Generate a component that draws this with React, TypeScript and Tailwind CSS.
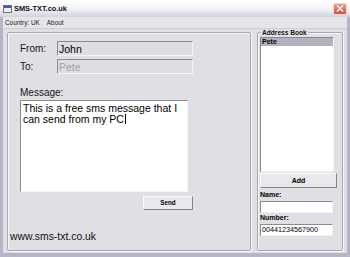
import React from "react";

const sunken =
  "border border-t-[#8a8a90] border-l-[#8a8a90] border-b-[#f4f4f6] border-r-[#f4f4f6]";
const raised =
  "border border-t-[#fbfbfc] border-l-[#fbfbfc] border-b-[#85858c] border-r-[#85858c] bg-[#e9e8ec]";

function WinIcon() {
  return (
    <svg width="9" height="8" viewBox="0 0 9 8" className="shrink-0">
      <rect x="0.5" y="0.5" width="8" height="7" fill="#eef0f6" stroke="#6b6f86" />
      <rect x="1" y="1" width="7" height="2" fill="#3f5fa8" />
    </svg>
  );
}

function CloseButton() {
  return (
    <div className="flex h-[12px] w-[14px] items-center justify-center rounded-[2px] border border-[#f3d6d2] bg-gradient-to-b from-[#ec9a8c] to-[#cf4f3e]">
      <svg width="8" height="7" viewBox="0 0 8 7">
        <path d="M1 0.5 L7 6.5 M7 0.5 L1 6.5" stroke="#fff" strokeWidth="1.4" />
      </svg>
    </div>
  );
}

function FieldRow({ label, value, muted }: { label: string; value: string; muted?: boolean }) {
  return (
    <div className="flex h-[15px] items-center">
      <span className="w-[37px] text-[10px] leading-[12px] text-[#161616]">{label}</span>
      <div
        className={`flex h-[15px] w-[136px] items-center bg-[#dedde2] pl-[1px] text-[10.5px] leading-[12px] ${sunken} ${
          muted ? "text-[#a3a3a8]" : "text-black"
        }`}
      >
        {value}
      </div>
    </div>
  );
}

export default function App() {
  return (
    <div className="flex h-[257px] w-[350px] flex-col bg-[#b4b6c7] font-['Liberation_Sans',Arial,sans-serif] text-black">
      {/* title bar */}
      <div className="flex h-[17px] items-center bg-gradient-to-b from-[#ffffff] via-[#f3f3f7] to-[#d2d3df] pl-[3px] pr-[3px]">
        <WinIcon />
        <span className="ml-[2px] text-[7.4px] font-bold leading-[9px] text-[#111]">SMS-TXT.co.uk</span>
        <div className="ml-auto">
          <CloseButton />
        </div>
      </div>

      <div className="mx-[3px] mb-[4px] flex flex-1 flex-col bg-[#e0dfe3]">
        {/* menu */}
        <div className="flex h-[12px] items-center gap-[7px] border-b border-[#cfced6] bg-[#e6e5ea] pl-[2px] text-[6.4px] leading-[8px] text-[#222]">
          <span>Country: UK</span>
          <span>About</span>
        </div>

        <div className="flex flex-1 gap-[6px] px-[4px] pb-[2px]">
          {/* left panel */}
          <div className="mt-[3px] flex w-[244px] flex-col rounded-[2px] border border-[#a9a9b2] shadow-[inset_1px_1px_0_#f7f7f9,1px_1px_0_#f7f7f9]">
            <div className="flex flex-col pl-[12px]">
              <div className="mt-[8px]">
                <FieldRow label="From:" value="John" />
              </div>
              <div className="mt-[3px]">
                <FieldRow label="To:" value="Pete" muted />
              </div>
              <span className="mt-[12px] text-[10px] leading-[13px] text-[#161616]">Message:</span>
              <div
                className={`mt-[1px] h-[92px] w-[168px] bg-white px-[2px] pt-[2px] text-[10.5px] leading-[11px] ${sunken}`}
              >
                This is a free sms message that I can send from my PC
                <span className="ml-[1px] inline-block h-[10px] w-[1px] bg-black align-[-1px]" />
              </div>
              <button
                type="button"
                className={`ml-[123px] mt-[4px] flex h-[14px] w-[50px] items-center justify-center text-[6.3px] font-bold leading-[8px] ${raised}`}
              >
                Send
              </button>
            </div>
            <span className="ml-[2px] mt-auto mb-[7px] text-[10.4px] leading-[12px] text-[#111]">
              www.sms-txt.co.uk
            </span>
          </div>

          {/* address book */}
          <fieldset className="w-[86px] rounded-[2px] border border-[#a9a9b2] shadow-[inset_1px_1px_0_#f7f7f9,1px_1px_0_#f7f7f9]">
            <legend className="ml-[3px] px-[1px] text-[6.6px] font-bold leading-[7px] text-[#111]">
              Address Book
            </legend>
            <div className="flex flex-col pl-[2px]">
              <div className={`mt-[1px] h-[135px] w-[74px] bg-white ${sunken}`}>
                <div className="h-[8px] bg-[#b2b1bd] pl-[1px] text-[7px] font-bold leading-[8px]">Pete</div>
              </div>
              <button
                type="button"
                className={`mt-[1px] flex h-[15px] w-[77px] items-center justify-center text-[7px] font-bold leading-[8px] ${raised}`}
              >
                Add
              </button>
              <span className="mt-[3px] text-[7px] font-bold leading-[8px]">Name:</span>
              <div className={`mt-[2px] h-[12px] w-[73px] bg-white ${sunken}`} />
              <span className="mt-[1px] text-[7px] font-bold leading-[8px]">Number:</span>
              <div
                className={`mt-[2px] flex h-[12px] w-[73px] items-center bg-white pl-[1px] text-[7.2px] leading-[8px] ${sunken}`}
              >
                00441234567900
              </div>
            </div>
          </fieldset>
        </div>
      </div>
    </div>
  );
}
